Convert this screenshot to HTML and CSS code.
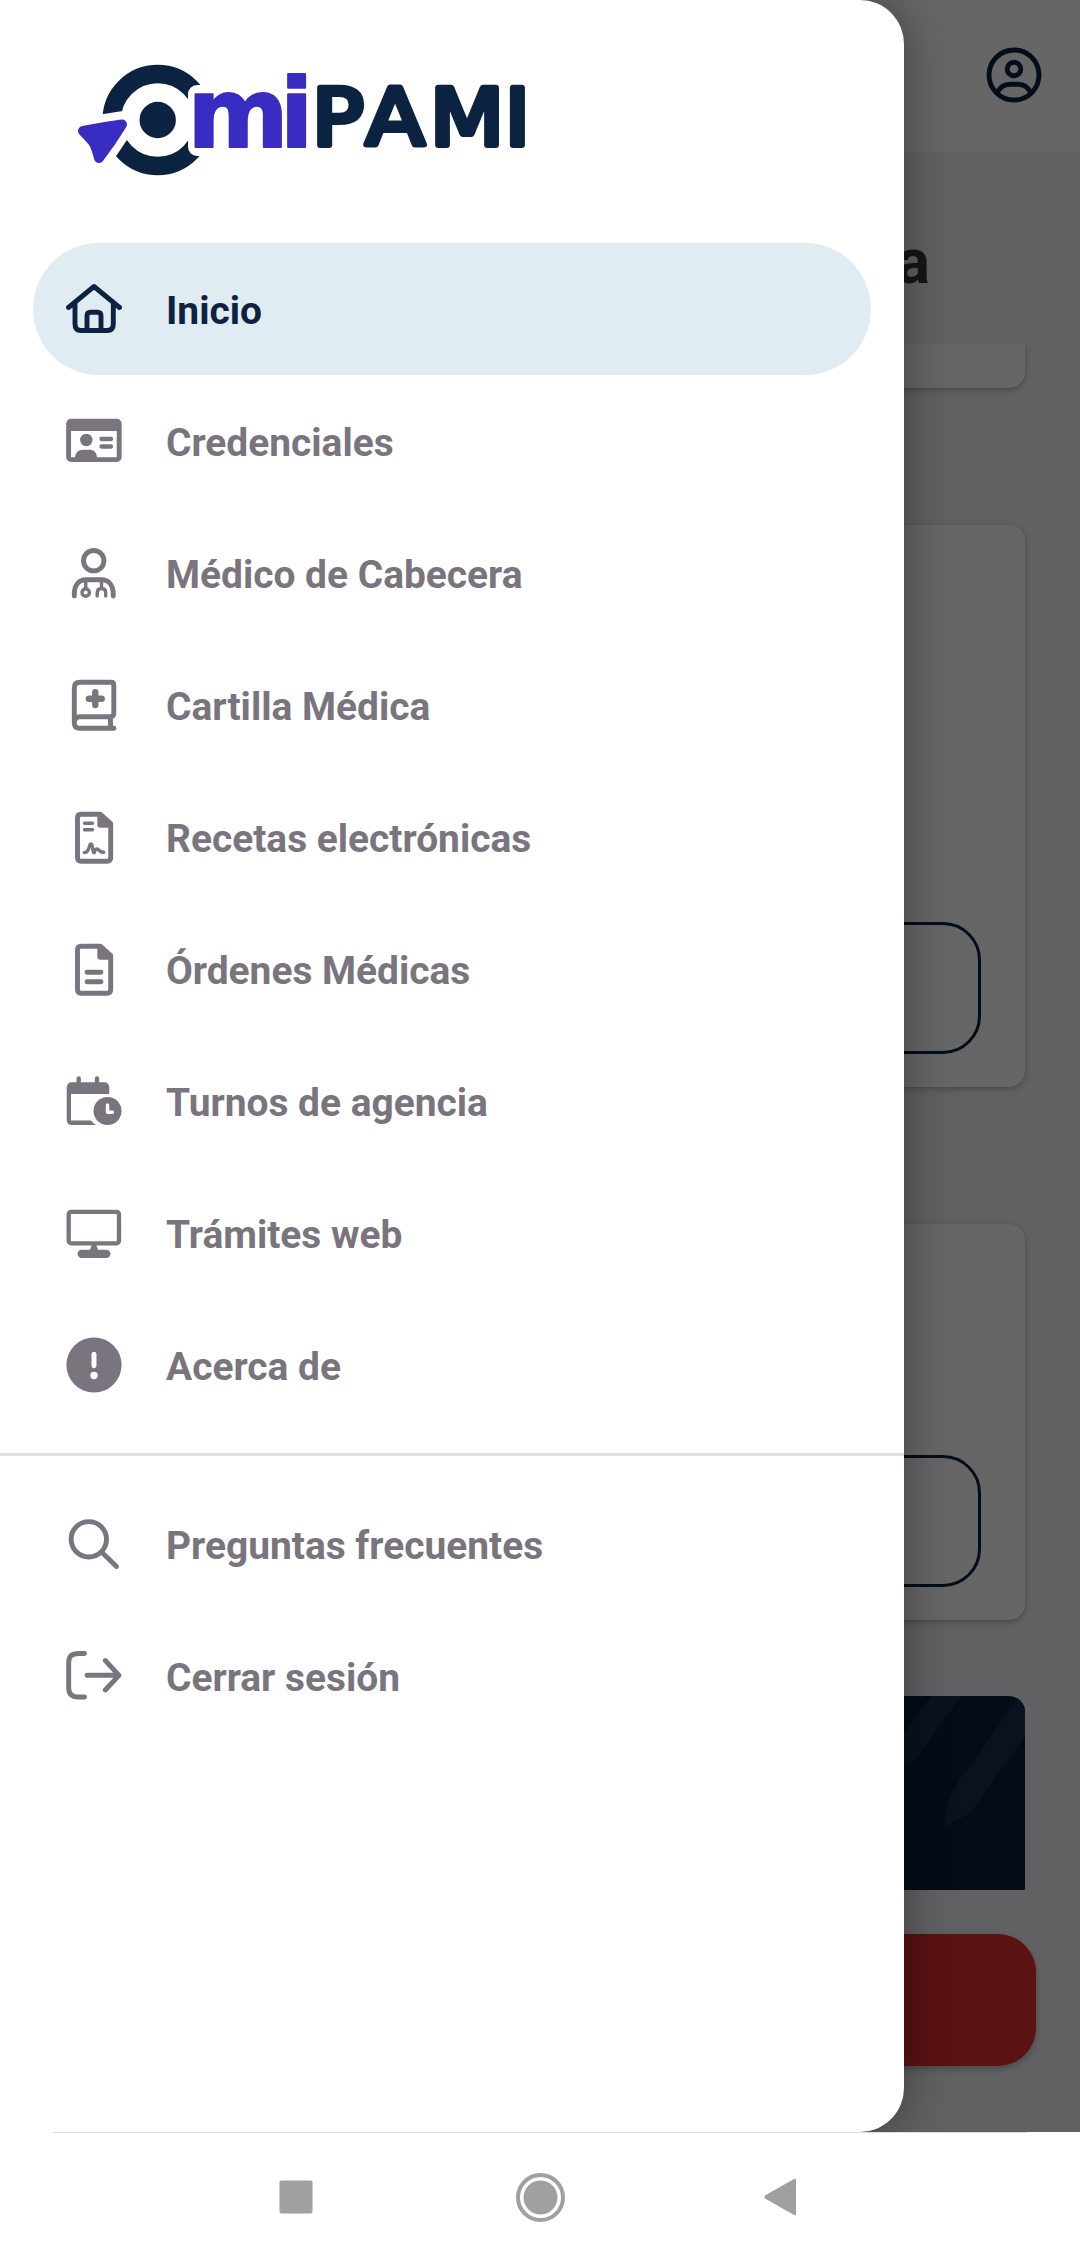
FILE: index.html
```html
<!DOCTYPE html>
<html lang="es">
<head>
<meta charset="utf-8">
<title>miPAMI</title>
<link rel="stylesheet" href="styles.css">
</head>
<body>
<div class="screen">
  <main class="home">
    <header class="topbar">
      <svg class="icon" viewBox="0 0 56 56"><circle cx="28" cy="28" r="25"/><circle cx="28" cy="22" r="6.8"/><path d="M11 46C14 40 19 37.3 24 37.3H32C37 37.3 42 40 45 46"/></svg>
    </header>
    <h1 class="greeting">a</h1>
    <div class="feed">
      <section class="card card-end"></section>
      <section class="card card-tall"><div class="outline-button"></div></section>
      <section class="card card-short"><div class="outline-button"></div></section>
      <section class="banner">
        <svg viewBox="0 0 970 194"><path d="M840 50L876 0H906L860 64Q856 68 849 69H840Z"/><path d="M890 131L892 110Q894 99 902 88L960 6L970 0V40L919 112Q914 119 906 122Z"/></svg>
      </section>
    </div>
    <div class="call-button"></div>
  </main>
  <div class="scrim"></div>
  <aside class="drawer">
    <svg class="logo" viewBox="0 0 480 120">
      <circle class="logo-ring" cx="97.7" cy="60" r="46"/>
      <rect class="logo-gap" x="128" y="25" width="34" height="71" rx="9"/>
      <path class="arrow-gap" d="M22 70L63 63.500L39 99L33 85Z"/>
      <path class="arrow" d="M23 71Q43 67 62 64.500Q52 81 39 98Q36 86 33 82Q29 77 23 71Z"/>
      <circle class="logo-dot" cx="97.700" cy="60" r="18.200"/>
      <text class="logo-mi" x="127.500 220" y="87">mi</text>
      <text class="logo-pami" transform="scale(1.1 1)" x="229 278 336.300 404.300" y="85">PAMI</text>
    </svg>
    <nav class="menu primary">
      <a class="item active"><svg class="icon" viewBox="0 0 56 56"><path d="M2.500 26.500L28 5.500L53.500 26.500M9 22V43Q9 49.500 15 49.500H41Q47.300 49.500 47.300 43V22M21 49V35Q21 31.300 24.500 31.300H31.500Q35 31.300 35 35V49"/></svg>Inicio</a>
      <a class="item"><svg class="icon" viewBox="0 0 56 56"><rect x="2.600" y="8.300" width="50.600" height="38.300" rx="2.500"/><path class="fill" d="M3 8H53V18H3ZM9 48V44Q10 36.700 17 36.700H24Q30 36.700 31 44V48Z"/><circle class="fill" cx="20.300" cy="27" r="6.200"/><path class="s4" d="M35.500 26H45M35.500 33.500H45"/></svg>Credenciales</a>
      <a class="item"><svg class="icon" viewBox="0 0 56 56"><circle class="s5" cx="27.700" cy="15.700" r="10.200"/><path class="s5" d="M8.300 51V49C8.300 40 13 34.700 20 34.700H35.500C42.500 34.700 47.200 40 47.200 49V51"/><path class="s3" d="M19.700 36V43M35.500 36V43M31.200 51V48Q31.200 43.500 35.500 43.500Q39.700 43.500 39.700 48V51"/><circle class="s3" cx="19.700" cy="47.500" r="3.700"/></svg>Médico de Cabecera</a>
      <a class="item"><svg class="icon" viewBox="0 0 56 56"><path d="M8.300 46V11Q8.300 5.300 14 5.300H45Q47.800 5.300 47.800 8V36Q47.800 39.500 44.500 39.800H14Q8.300 39.800 8.300 46Q8.300 51.300 14 51.300H48M44.500 40V51"/><path class="s6" d="M29.300 15.300V28.100M22.900 21.700H35.700"/></svg>Cartilla Médica</a>
      <a class="item"><svg class="icon" viewBox="0 0 56 56"><path d="M34.500 5.300H15Q11.500 5.300 11.500 9V48.500Q11.500 52.200 15 52.200H41Q44.700 52.200 44.700 48.500V14.500Z"/><path class="fill" d="M31.300 4H35L46 14V18.800H34.500Q31.300 18.800 31.300 15.500Z"/><path class="s3" d="M18.500 14.300H26.500M18.500 20.700H26.500M18.300 43.500C24 44 22.500 35 25 35C27.500 35 26 43.700 28 43.700C29.500 43.700 28 40 31 40C33.500 40 33 43.500 37.700 43.300"/></svg>Recetas electrónicas</a>
      <a class="item"><svg class="icon" viewBox="0 0 56 56"><path d="M34.500 5.300H15Q11.500 5.300 11.500 9V48.500Q11.500 52.200 15 52.200H41Q44.700 52.200 44.700 48.500V14.500Z"/><path class="fill" d="M31.300 4H35L46 14V18.800H34.500Q31.300 18.800 31.300 15.500Z"/><path d="M21 31.300H35M21 40.800H35"/></svg>Órdenes Médicas</a>
      <a class="item"><svg class="icon" viewBox="0 0 56 56"><path class="fill" d="M.700 15Q.700 9.300 6 9.300H38Q43.300 9.300 43.300 15V21H5V47.500H25Q27 50 30 52H6Q.700 52 .700 46.500Z"/><path class="s4" d="M12.700 12V5.300M31 12V5.300"/><circle class="fill" cx="41.500" cy="38" r="14"/><path class="cut s3" d="M41.500 32V39.200H46.500"/></svg>Turnos de agencia</a>
      <a class="item"><svg class="icon" viewBox="0 0 56 56"><rect class="s4" x="2.700" y="6.800" width="50.300" height="31.500" rx="2.500"/><path class="fill" d="M26 39H30L32 45H24Z"/><rect class="fill" x="11.500" y="44.700" width="33" height="8.300" rx="4.150"/></svg>Trámites web</a>
      <a class="item"><svg class="icon" viewBox="0 0 56 56"><circle class="fill" cx="28" cy="28" r="27.600"/><path class="cut" d="M28 17.300V28.700"/><circle class="dot" cx="28" cy="38.500" r="3.700"/></svg>Acerca de</a>
    </nav>
    <hr class="divider">
    <nav class="menu">
      <a class="item"><svg class="icon" viewBox="0 0 56 56"><circle class="s5" cx="22.800" cy="22.300" r="17.700"/><path class="s5" d="M36 35.500L50.500 49.500"/></svg>Preguntas frecuentes</a>
      <a class="item"><svg class="icon" viewBox="0 0 56 56"><path class="s5" d="M18.500 4.500H12.500Q2.700 4.500 2.700 13.500V39Q2.700 48 12.500 48H18.500M21 26.300H52.500M39.300 11.500L53 26.300L39.300 41"/></svg>Cerrar sesión</a>
    </nav>
  </aside>
</div>
<footer class="sysnav">
  <div class="sysline"></div>
  <svg class="sysicons" viewBox="0 0 1080 129"><rect x="279.500" y="47.500" width="33" height="33" rx="2"/><circle class="ring" cx="540.500" cy="64.500" r="22.500"/><circle cx="540.500" cy="64.500" r="17"/><path d="M796 47V81Q796 83 794 82L765 65.500Q763.500 64 765 62.500L794 46Q796 45 796 47Z"/></svg>
</footer>
</body>
</html>
```
FILE: styles.css
```css
* { box-sizing: border-box; }
body { margin: 0; width: 1080px; height: 2262px; overflow: hidden; background: #fff; font-family: Roboto, sans-serif; }
.screen { position: relative; height: 2132px; overflow: hidden; }

.home { height: 2132px; display: flex; flex-direction: column; background: #f2f2f7; }
.topbar { height: 152px; flex: none; display: flex; align-items: center; justify-content: flex-end; padding: 0 38px 2px 0; background: #fff; color: #0b2341; }
.greeting { height: 192px; flex: none; margin: 0; padding: 72px 150px 0 0; text-align: right; font-size: 63px; line-height: 76px; font-weight: 700; color: #39373f; }
.feed { height: 1546px; flex: none; padding: 0 55px; overflow: hidden; display: flex; flex-direction: column; }
.card { flex: none; display: flex; flex-direction: column; justify-content: flex-end; padding: 0 44px 33px; border-radius: 16px; background: #fff; box-shadow: 0 2px 6px rgba(0, 0, 0, .25); }
.card-end { height: 44px; padding: 0; border-radius: 0 0 16px 16px; }
.card-tall { height: 562px; margin-top: 137px; }
.card-short { height: 396px; margin-top: 137px; }
.outline-button { height: 132px; border: 3px solid #0b2341; border-radius: 38px; }
.banner { flex: none; height: 194px; margin-top: 76px; border-radius: 16px 16px 0 0; background: #081f3b; overflow: hidden; }
.banner svg { display: block; width: 970px; height: 194px; fill: #1a2d4c; }
.call-button { flex: none; height: 132px; margin: 44px 44px 0; border-radius: 38px; background: #e02d30; box-shadow: 0 3px 6px rgba(0, 0, 0, .25); }

.scrim { position: absolute; inset: 0; background: rgba(0, 0, 0, .6); }
.drawer { position: absolute; left: 0; top: 0; width: 904px; height: 2132px; border-radius: 0 44px 44px 0; background: #fff; box-shadow: 0 0 48px rgba(0, 0, 0, .38); }
.logo { display: block; width: 480px; height: 120px; margin: 60px 0 63px 60px; overflow: visible; }
.logo-ring { fill: none; stroke: #0b2341; stroke-width: 18.5; }
.logo-dot { fill: #0b2341; }
.logo-gap { fill: #fff; }
.arrow-gap { fill: #fff; stroke: #fff; stroke-width: 25; stroke-linejoin: round; }
.arrow { fill: #392cc3; stroke: #392cc3; stroke-width: 10; stroke-linejoin: round; }
.logo-mi { font: 700 97px "DejaVu Sans", sans-serif; fill: #392cc3; stroke: #392cc3; stroke-width: 2; stroke-linejoin: round; }
.logo-pami { font: 400 78px "DejaVu Sans", sans-serif; fill: #0b2341; stroke: #0b2341; stroke-width: 6; stroke-linejoin: round; stroke-linecap: round; }

.menu { display: flex; flex-direction: column; padding: 0 33px; }
.item { display: flex; align-items: center; gap: 44px; height: 132px; padding: 0 33px; border-radius: 66px; font-size: 38.9px; font-weight: 700; color: #79747e; }
.primary .item { padding-top: 2px; }
.primary .icon { margin-bottom: 2px; }
.item.active { background: #e1ecf2; color: #0b2341; }
.icon { flex: none; width: 56px; height: 56px; fill: none; stroke: currentColor; stroke-width: 4.9; stroke-linecap: round; stroke-linejoin: round; }
.fill { fill: currentColor; stroke: none; }
.s3 { stroke-width: 3.4; }
.s4 { stroke-width: 4.3; }
.s5 { stroke-width: 4.9; }
.s6 { stroke-width: 6.4; }
.cut { stroke: #fff; }
.dot { fill: #fff; stroke: none; }
.divider { height: 3px; margin: 22px 0 23px; border: 0; background: #e0e2e1; }

.sysnav { height: 130px; background: #fff; }
.sysline { height: 1px; margin: 0 53px; background: #dedede; }
.sysicons { display: block; width: 1080px; height: 129px; fill: #a0a0a0; }
.ring { fill: none; stroke: #a0a0a0; stroke-width: 4; }
```
